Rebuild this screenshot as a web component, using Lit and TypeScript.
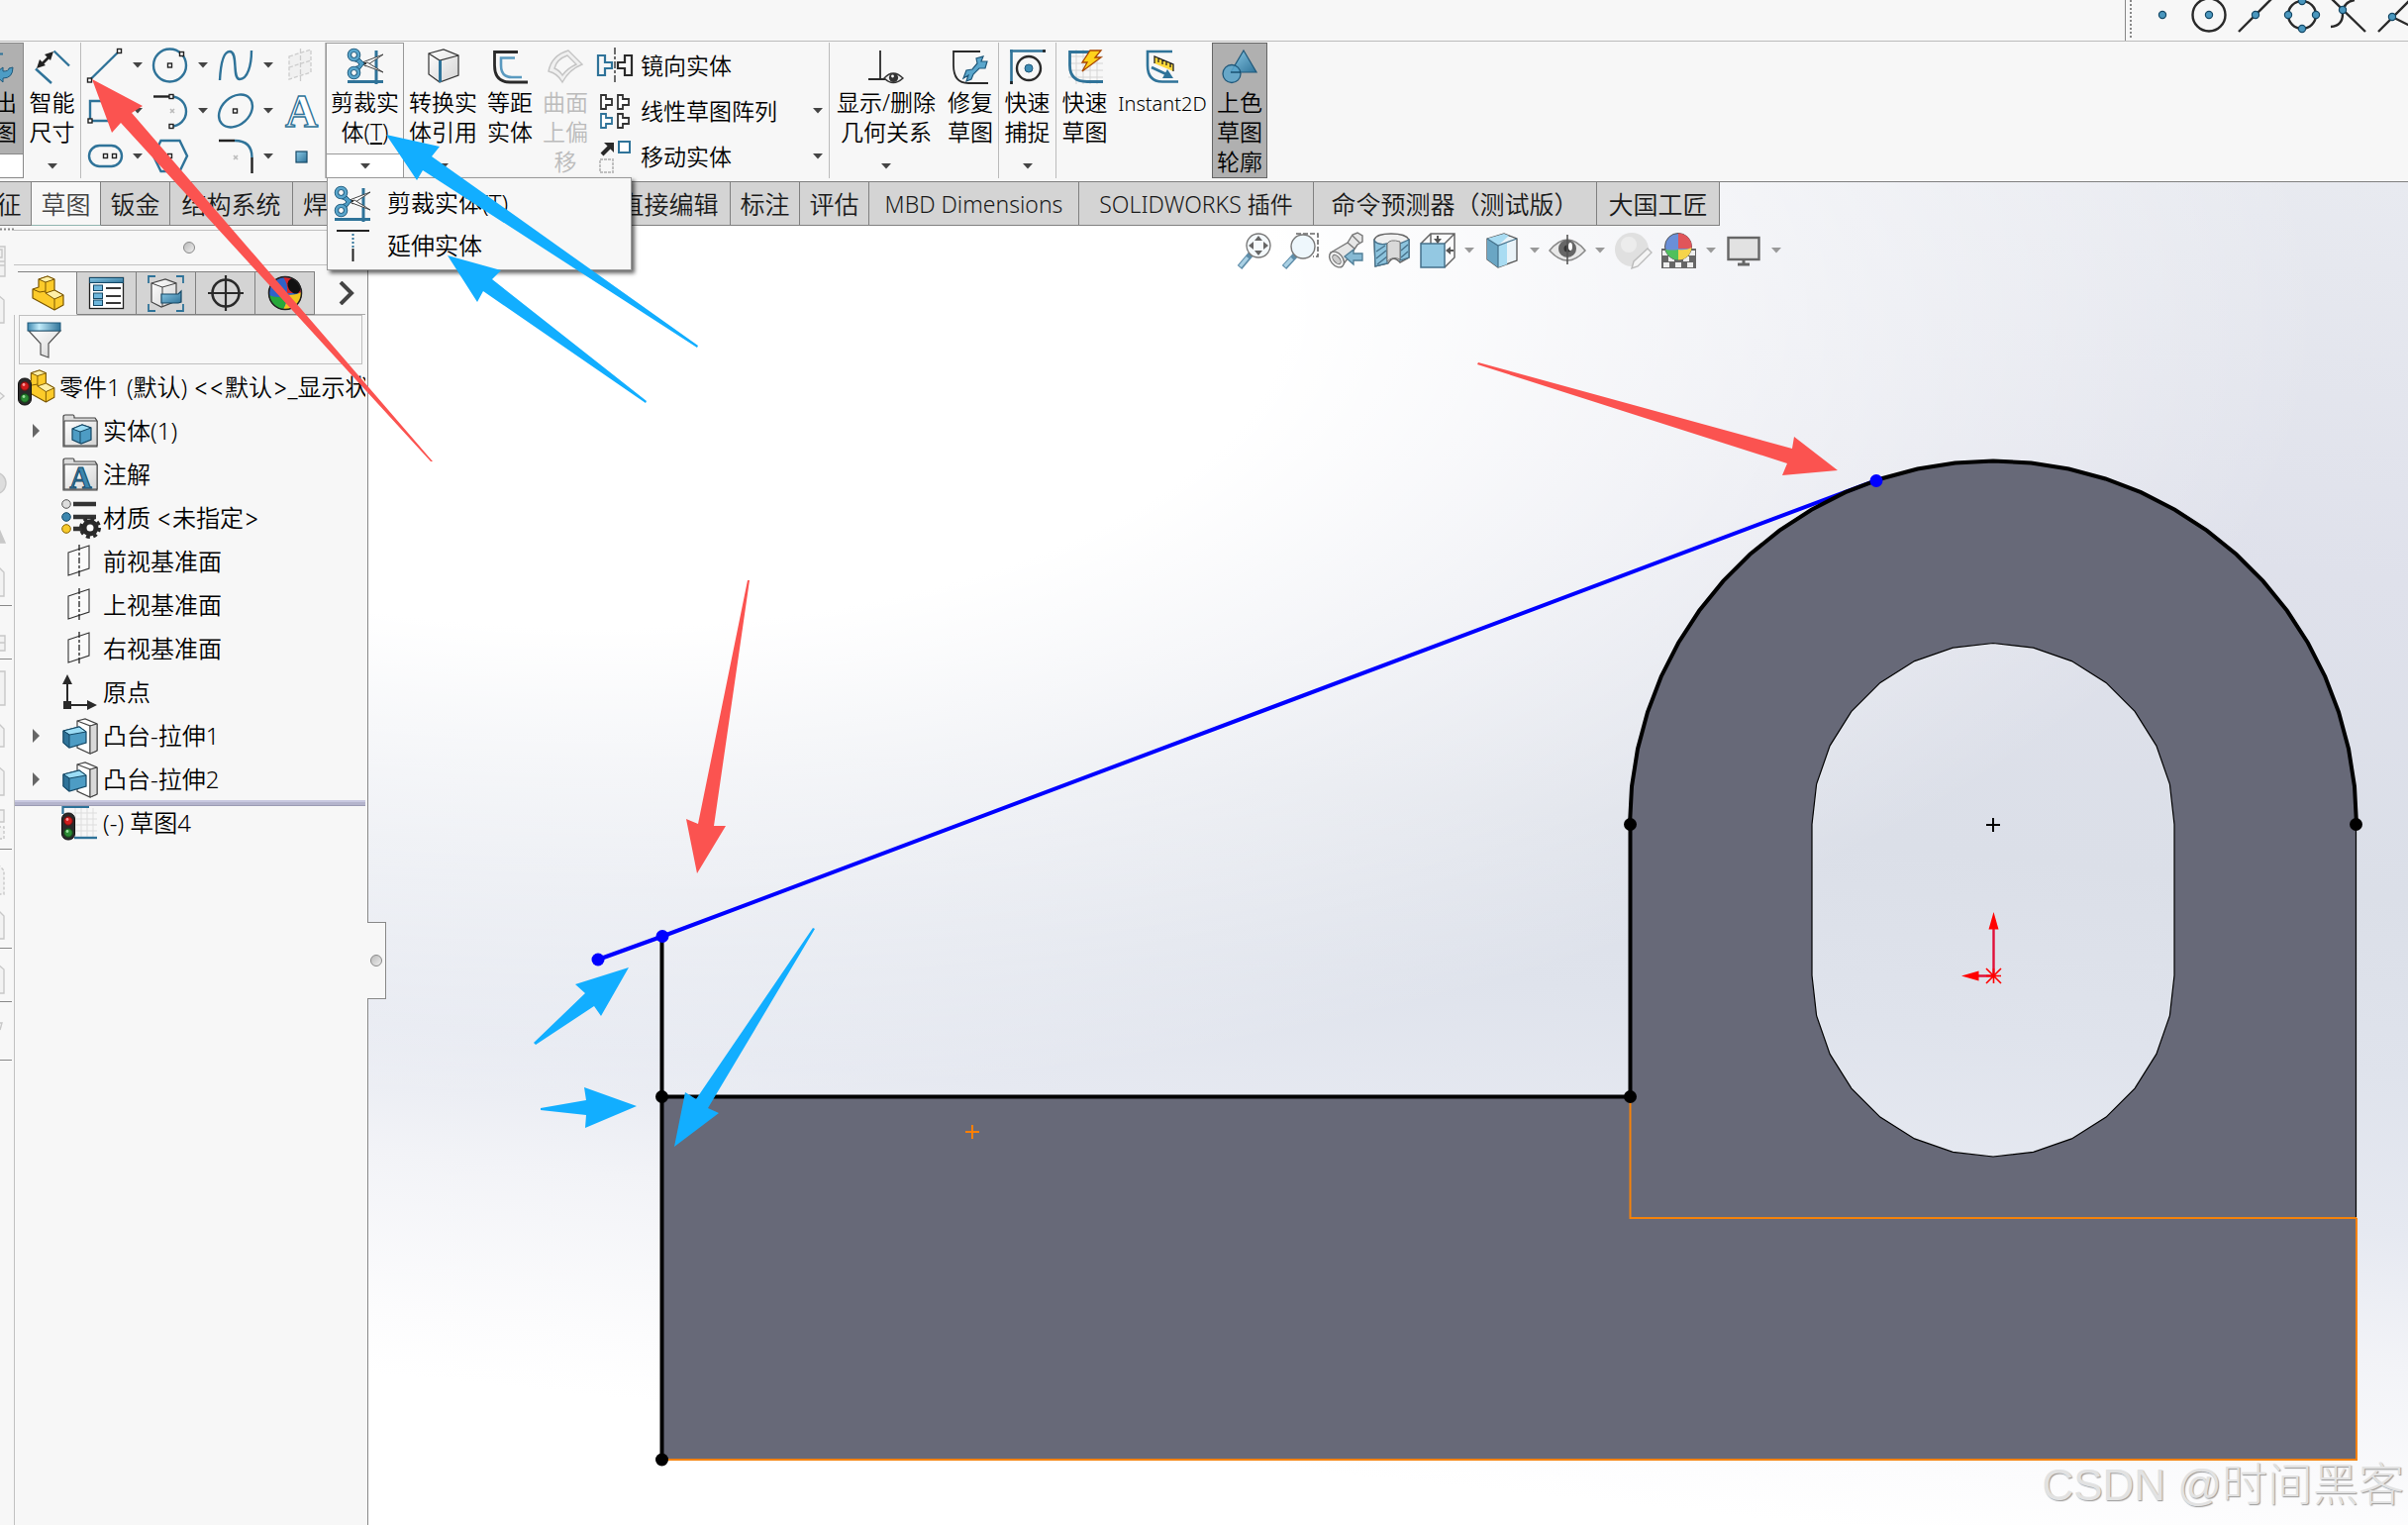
import { LitElement, html, svg, css, nothing } from "lit";
import type { SVGTemplateResult } from "lit";
import { customElement, state } from "lit/decorators.js";
import { classMap } from "lit/directives/class-map.js";
import { styleMap } from "lit/directives/style-map.js";

const BLUE = "#2f7399";
const INK = "#333";

const grip = (x: number, y: number) =>
  svg`<rect x=${x - 2} y=${y - 2} width="4" height="4" fill="#fff" stroke="#222" stroke-width="1.4"/>`;
const cross = (x: number, y: number) =>
  svg`<path d="M${x - 2} ${y - 2}l4 4m0 -4l-4 4" stroke="#bbb" stroke-width="1.6"/>`;

const partBody = svg`
  <path d="M3 14L9 12V4L18 1L25 4V15L34 20V30L25 35L3 23Z" fill="#fccb2a" stroke="#7a5600" stroke-width="1.2" stroke-linejoin="round"/>
  <path d="M9 4L18 1L25 4L16 7Z" fill="#fff0a8" stroke="#7a5600" stroke-width="1"/>
  <path d="M25 15L34 20L25 24L16 18Z" fill="#fff0a8" stroke="#7a5600" stroke-width="1"/>
  <path d="M16 7V18M3 14L10 17L16 16M25 24V35" fill="none" stroke="#7a5600" stroke-width="1"/>`;

const trafficLight = (x: number, y: number) => svg`
  <rect x=${x} y=${y} width="13" height="27" rx="6" fill="#2a2a2a" stroke="#111"/>
  <circle cx=${x + 6.5} cy=${y + 8} r="4.2" fill="#d01c1c" stroke="#701010"/>
  <circle cx=${x + 6.5} cy=${y + 20} r="4.2" fill="#2c8a34" stroke="#124d18"/>
  <circle cx=${x + 5.5} cy=${y + 6.5} r="1.4" fill="#ff9a9a"/>
  <circle cx=${x + 5.5} cy=${y + 18.5} r="1.4" fill="#9ee0a0"/>`;

const folder = svg`
  <path d="M2 34V4Q2 2 4 2H12Q13 2 13 4V5H34L36 8V34Z" fill="#dcdcdc" stroke="#444" stroke-width="1.2"/>
  <path d="M3 8H36V33H3Z" fill="url(#sheen)" stroke="#444" stroke-width="1"/>`;

const scissors = svg`
  <path d="M29 3V37M0 34.5H36" stroke=${BLUE} stroke-width="3"/>
  <path d="M15 15L36 7L18 19Z" fill="#fff" stroke="#444" stroke-width="1"/>
  <path d="M15 17L36 25L20 15Z" fill="#fff" stroke="#444" stroke-width="1"/>
  <path d="M10 9L17 16L10 25L6 20Q11 19 12 17Q10 14 5 13Z" fill="#4d9cc4" stroke="#1f587a" stroke-width="1"/>
  <circle cx="6.5" cy="7.5" r="4.6" fill="#f7f7f7" stroke="#1f587a" stroke-width="4.4"/>
  <circle cx="6.5" cy="7.5" r="4.6" fill="none" stroke="#5aa6cc" stroke-width="2.6"/>
  <circle cx="6.5" cy="25.5" r="4.6" fill="#f7f7f7" stroke="#1f587a" stroke-width="4.4"/>
  <circle cx="6.5" cy="25.5" r="4.6" fill="none" stroke="#5aa6cc" stroke-width="2.6"/>
  <circle cx="18" cy="16" r="1" fill="#111"/>`;

const planeIcon = svg`
  <path d="M7 9L28 2V25L7 32Z" fill="#fafafa" stroke="#333" stroke-width="1.1"/>
  <path d="M18 1V35" stroke="#222" stroke-width="1.3" stroke-dasharray="6 2 3 2"/>`;

const extrude = svg`
  <path d="M16 3L24 1L36 6V33L29 36L16 30Z" fill="#fff" stroke="#444" stroke-width="1.2"/>
  <path d="M16 3L29 8V36M29 8L36 6" fill="none" stroke="#444" stroke-width="1.1"/>
  <path d="M29 8L36 6V33L29 36Z" fill="#d9d9d9" stroke="#444" stroke-width="1"/>
  <path d="M2 13L18 9L25 14V25L8 30L2 25Z" fill="#4d9cc4" stroke="#144866" stroke-width="1.2"/>
  <path d="M2 13L18 9L25 14L8 17Z" fill="#9bdcf5" stroke="#144866" stroke-width="1"/>
  <path d="M2 13L8 17V30L2 25Z" fill="#2f7399" stroke="#144866" stroke-width="1"/>`;

const teeShape = (x: number, y: number, c: string) =>
  svg`<path d="M${x} ${y}h5v4h6v6h-6v4h-5z" fill="#fff" stroke=${c} stroke-width="1.8"/>`;

const ICONS: Record<string, SVGTemplateResult> = {
  exit: svg`<path d="M8 6.5H27" stroke=${BLUE} stroke-width="2"/>
    <path d="M37 20Q37 31 27 31V35L18 27L27 20V24Q33 24 33 21Z" fill="#4d9cc4" stroke="#1f587a"/>`,
  dim: svg`<path d="M19.5 3.5L35 18.5M1 21.5L17 36" stroke=${BLUE} stroke-width="2.4"/>
    <path d="M7 17L16 8" stroke="#222" stroke-width="2.6"/><path d="M2 21L5 12L11 18ZM19 4L10 7L16 13Z" fill="#222"/>`,
  line: svg`<path d="M2.5 33L32.5 3.5" stroke=${BLUE} stroke-width="2.4"/>${grip(2.5, 33)}${grip(32.5, 3.5)}`,
  circle: svg`<circle cx="17.5" cy="18" r="16.5" fill="none" stroke=${BLUE} stroke-width="2.4"/>${grip(17.5, 18)}${grip(29.5, 6.5)}`,
  spline: svg`<path d="M2 33C3 14 6 4 12 4C21 4 14 32 22 32C30 32 34 18 34 3" fill="none" stroke=${BLUE} stroke-width="2.4"/>`,
  plane3: svg`<path d="M6 9L28 2V25L6 32ZM6 20L28 13" fill="#f0f0f0" stroke="#ccc" stroke-width="1.3" stroke-dasharray="4 2"/><path d="M17.500 1V36" stroke="#ccc" stroke-width="1.300" stroke-dasharray="5 2"/>`,
  rect: svg`<path d="M3 8H33V28H3Z" fill="none" stroke=${BLUE} stroke-width="2.4"/>${grip(3, 28)}${grip(33, 8)}`,
  arc: svg`<path d="M1 3.500H18" stroke="#222" stroke-width="2.4"/><path d="M19 3.500A15 15 0 0 1 19 33.500" fill="none" stroke=${BLUE} stroke-width="2.4"/>${cross(20, 18)}${grip(19, 3.5)}${grip(19, 33.5)}`,
  ellipse: svg`<ellipse cx="18" cy="18" rx="19" ry="14" transform="rotate(-42 18 18)" fill="none" stroke=${BLUE} stroke-width="2.4"/>${grip(17.5, 18)}`,
  text: svg`<text x="18.500" y="34" text-anchor="middle" font-family="Liberation Serif, serif" font-size="46" font-weight="bold" fill="#fff" stroke=${BLUE} stroke-width="1.4">A</text>`,
  slot: svg`<rect x="2" y="7" width="33" height="21" rx="10.500" fill="none" stroke=${BLUE} stroke-width="2.4"/>${grip(18.5, 17.5)}${grip(27.5, 17.5)}`,
  polygon: svg`<path d="M8.500 2H27.500L35 17.500L27.500 33H8.500L1 17.500Z" fill="none" stroke=${BLUE} stroke-width="2.4"/>${grip(17.5, 17.5)}`,
  fillet: svg`<path d="M1 2H17M34.500 19V35" stroke="#222" stroke-width="2.4"/><path d="M17 2Q34.500 2 34.500 19" fill="none" stroke=${BLUE} stroke-width="2.4"/>${cross(18, 19)}`,
  point: svg`<rect x="13" y="13" width="11" height="11" fill="url(#steel)" stroke="#144866" stroke-width="1.2"/>`,
  trim: scissors,
  extend: svg`<path d="M2 3H35" stroke="#222" stroke-width="2"/><path d="M18.500 6V20" stroke=${BLUE} stroke-width="2" stroke-dasharray="2 2"/><path d="M18.500 21V34" stroke="#222" stroke-width="2"/>`,
  convert: svg`<path d="M3 6L18 2L33 8V28L14 35L3 27Z" fill="url(#sheen)" stroke="#333" stroke-width="1.2"/><path d="M3 6L14 13L33 8" fill="none" stroke="#333" stroke-width="1.2"/><path d="M14.500 13V35" stroke=${BLUE} stroke-width="3"/>`,
  offset: svg`<path d="M26 4.500H2.500V18Q2.500 35 18 35H36" fill="none" stroke="#2a2a2a" stroke-width="2.8"/><path d="M23 10.500H9V18Q9 30 20 30H30" fill="none" stroke="#5a9ac0" stroke-width="2.6"/>`,
  surface: svg`<path d="M21 3L35 17Q22 22 15 35Q10 26 1 24Q4 8 21 3Z" fill="#f0f0f0" stroke="#c4c4c4" stroke-width="1.4"/><path d="M20 8L29 17Q20 21 15 28Q12 23 7 21Q9 12 20 8Z" fill="#f7f7f7" stroke="#c4c4c4" stroke-width="1.4"/>`,
  mirror: svg`<path d="M2 8h7v7h7v6h-7v7h-7z" fill="none" stroke=${BLUE} stroke-width="2.2"/><path d="M36 8h-7v7h-7v6h7v7h7z" fill="none" stroke="#2a2a2a" stroke-width="2.2"/><path d="M19 0V37" stroke="#222" stroke-width="1.3" stroke-dasharray="7 2 3 2"/>`,
  pattern: svg`${teeShape(5, 2, INK)}${teeShape(22, 2, INK)}${teeShape(5, 21, BLUE)}${teeShape(22, 21, INK)}`,
  move: svg`<path d="M6 16L14 8" stroke="#2a2a2a" stroke-width="4"/><path d="M18 4V14L8 4Z" fill="#2a2a2a"/><rect x="23" y="3" width="11" height="11" fill="#fff" stroke=${BLUE} stroke-width="2"/><rect x="4" y="21" width="13" height="13" fill="none" stroke="#c0c0c0" stroke-width="2" stroke-dasharray="3 1"/>`,
  relations: svg`<path d="M12 3V32M0 32H18" stroke="#2a2a2a" stroke-width="1.8"/><path d="M16 31Q25 21 35 31Q25 40 16 31Z" fill="#eee" stroke="#333" stroke-width="1.4"/><circle cx="25.500" cy="30.500" r="4.600" fill="#333"/><circle cx="24.500" cy="29" r="1.400" fill="#fff"/>`,
  repair: svg`<path d="M28 4H1V18Q1 36 16 36H36" fill="none" stroke="#2a2a2a" stroke-width="1.8"/><path d="M11 31L14 23L20 22L25 16L24 11L31 9L29 14L35 14L33 21L27 21L21 27L19 32L14 34L16 28Z" fill="#5aa6cc" stroke="#1f587a" stroke-width="1.200"/>`,
  snap: svg`<path d="M0 3.500H36M1.500 2V37" stroke=${BLUE} stroke-width="2.6"/><path d="M33 3.500H36M1.500 34V37" stroke="#222" stroke-width="2.600"/><circle cx="19" cy="21" r="12" fill="none" stroke="#2a2a2a" stroke-width="2.400"/><circle cx="19" cy="21" r="4" fill="#3f8db5" stroke="#1f587a"/>`,
  rapid: svg`<path d="M9 2V37M16 2V37M23 2V37M30 2V37M1 9H36M1 16H36M1 23H36M1 30H36" stroke="#d5d5d5"/><path d="M22 4.500H2.500V18Q2.500 34.500 20 34.500H36" fill="none" stroke=${BLUE} stroke-width="2.8"/><path d="M23 3H34L28 10H34L15 24L20 15H15Z" fill="#ffd21c" stroke="#a84600" stroke-width="1.300"/>`,
  instant: svg`<path d="M28 4H3V18Q3 34.500 18 34.500H34" fill="none" stroke=${BLUE} stroke-width="2.600"/><path d="M10 9L29 17V24L10 16Z" fill="#ffd83a"/><path d="M10 16V9L29 17V24M14 11V15M18 12.500V17M22 14V18M26 16V20" fill="none" stroke="#222" stroke-width="1.300"/><path d="M7 20L22 27" stroke=${BLUE} stroke-width="2.800"/><path d="M29 31L18 31L23 22Z" fill=${BLUE}/>`,
  shaded: svg`<path d="M22 3L35 25H9Z" fill="url(#steel)" stroke="#1f587a" stroke-width="1.2"/><circle cx="10" cy="26.500" r="9" fill="#5aa6cc" fill-opacity=".85" stroke="#1f587a" stroke-width="1.300"/><path d="M9 25H19" stroke="#144866" stroke-width="1.300"/>`,

  part: partBody,
  props: svg`<rect x="1.500" y="2.500" width="34" height="31" fill="#fff" stroke="#222" stroke-width="1.300"/><rect x="1.500" y="2.500" width="34" height="5" fill="url(#steel)" stroke="#144866"/>
    ${[10, 18, 25].map((y) => svg`<rect x="5.500" y=${y} width="9" height="5.500" fill="#6db6dc" stroke="#144866"/><path d="M18 ${y + 3}H33" stroke="#222" stroke-width="1.800"/>`)}`,
  config: svg`<path d="M1 8V1H8M29 1H36V8M36 29V36H29M8 36H1V29" fill="none" stroke=${BLUE} stroke-width="1.800"/><path d="M4 8L18 4L29 8V26L14 32L4 27Z" fill="url(#sheen)" stroke="#444" stroke-width="1.200"/><path d="M4 8L15 12L29 8M15 12V31" fill="none" stroke="#444"/><path d="M14 19H31L34 16V27L31 28H14Z" fill="url(#steel)" stroke="#144866" stroke-width="1.200"/>`,
  target: svg`<circle cx="19" cy="18" r="13.500" fill="none" stroke="#2a2a2a" stroke-width="2.600"/><path d="M19 0V36M1 18H37" stroke="#2a2a2a" stroke-width="2.200"/>`,
  ball: svg`<circle cx="19" cy="18" r="16.500" fill="#2f62c8" stroke="#222"/><path d="M17 2A16.500 16.500 0 0 1 35 18L21 18Q22 8 17 2Z" fill="#d8232a"/><path d="M2.500 20Q12 24 21 20Q20 29 17 34.500A16.500 16.500 0 0 1 2.500 20Z" fill="#27a83a"/><path d="M21 20Q30 20 35.500 17A16.500 16.500 0 0 1 17 34.500Q21 28 21 20Z" fill="#f2c51d"/><ellipse cx="28" cy="11" rx="6" ry="8" transform="rotate(-30 28 11)" fill="#111"/><circle cx="19" cy="18" r="16.500" fill="none" stroke="#222" stroke-width="1.500"/>`,
  funnel: svg`<path d="M3 9L15 22V33L23 36V22L35 9Z" fill="url(#sheen)" stroke="#555" stroke-width="1.200"/><rect x="2" y="1" width="33" height="8" fill="url(#glow)" stroke="#1f587a"/>`,

  root: svg`<g transform="translate(3 0) scale(.94)"><g transform="translate(2 0)">${partBody}</g></g>${trafficLight(0.5, 9)}`,
  bodies: svg`${folder}<path d="M11 16L21 12L30 15V27L20 31L11 27Z" fill="#4d9cc4" stroke="#144866" stroke-width="1.200"/><path d="M11 16L21 12L30 15L19 19Z" fill="#9bdcf5" stroke="#144866"/><path d="M19 19V31" stroke="#144866"/>`,
  notes: svg`${folder}<text x="19.500" y="32" text-anchor="middle" font-family="Liberation Serif, serif" font-size="31" font-weight="bold" fill="#3c86ae" stroke="#144866">A</text>`,
  material: svg`<path d="M12 4H35M12 17H35M12 29H22" stroke="#333" stroke-width="4.500"/><circle cx="5" cy="4" r="4.300" fill="#ddd" stroke="#555"/><circle cx="5" cy="17" r="4.300" fill="#3c86ae" stroke="#144866"/><circle cx="5" cy="29" r="4.300" fill="#f7ca2b" stroke="#8a6400"/><circle cx="29" cy="28" r="6" fill="#fff" stroke="#2a2a2a" stroke-width="5"/><circle cx="29" cy="28" r="9.500" fill="none" stroke="#2a2a2a" stroke-width="3" stroke-dasharray="4 3.500"/>`,
  plane: planeIcon,
  origin: svg`<path d="M6 29V8M6 31H28" stroke="#2a2a2a" stroke-width="2"/><path d="M6 0L11 10H1ZM36 31L26 36V26Z" fill="#2a2a2a"/><rect x="2" y="27" width="8" height="8" fill="#2a2a2a"/>`,
  extrude,
  sketch: svg`<path d="M14 3V32M20 3V32M26 3V32M32 3V32M8 8H36M8 14H36M8 20H36M8 26H36" stroke="#ddd"/><path d="M1.500 9V2H28" fill="none" stroke=${BLUE} stroke-width="2.200"/><path d="M13 33H36" stroke=${BLUE} stroke-width="2.400"/>${trafficLight(0.5, 8)}`,

  zoomFit: svg`<path d="M3 35L14 22" stroke="#5d8ca8" stroke-width="6"/><path d="M3.500 34L11 25" stroke="#a9d0e4" stroke-width="3.500"/><circle cx="22" cy="13" r="12" fill="#f4f9fc" stroke="#777" stroke-width="1.400"/><path d="M22 3L26 8H18ZM22 23L26 18H18ZM12 13L17 9V17ZM32 13L27 9V17Z" fill="#666"/>`,
  zoomArea: svg`<path d="M14 1H36V24H31" fill="none" stroke="#666" stroke-width="1.600" stroke-dasharray="5 2"/><path d="M2 35L13 23" stroke="#5d8ca8" stroke-width="6"/><path d="M2.500 34L10 26" stroke="#a9d0e4" stroke-width="3.500"/><circle cx="21" cy="14" r="12" fill="#eef7fc" stroke="#777" stroke-width="1.400"/>`,
  prevView: svg`<path d="M3 20L20 10L25 2L30 0L35 3L35 9L30 12L26 18L15 33Z" fill="#e6e6e6" stroke="#777" stroke-width="1.400"/><path d="M20 10L27 16M25 3L32 10" stroke="#777" stroke-width="1.300"/><ellipse cx="9" cy="27" rx="6" ry="9" transform="rotate(-40 9 27)" fill="#f2f2f2" stroke="#777" stroke-width="1.400"/><ellipse cx="9" cy="27" rx="3" ry="5.500" transform="rotate(-40 9 27)" fill="#ccc" stroke="#777"/><path d="M17 24L26 17V21H35V28H26V32Z" fill="#86b9d3" stroke="#4f7d96" stroke-width="1.300"/>`,
  section: svg`<path d="M1 7Q3 1 18 1Q33 1 36 7V25L27 30Q20 22 15 31L2 34Z" fill="#f0f0f0" stroke="#666" stroke-width="1.400"/><path d="M1 8Q5 13 14 11V31L2 34ZM36 7L27 11V28L36 25Z" fill="#8cc3dd" stroke="#44708a" stroke-width="1.300"/><path d="M3 19L12 13M3 26L13 18M4 32L14 24M28 18L35 12M28 25L35 19" stroke="#44708a" stroke-width="1.300"/><path d="M14 11Q17 6 27 9V27Q20 23 14 29Z" fill="#d9d9d9" stroke="#777"/>`,
  orient: svg`<path d="M2 11L12 1H36V25L26 35M12 1V11M36 1L26 11" fill="none" stroke="#666" stroke-width="1.500"/><path d="M2 11H26V35H2Z" fill="#93c8e2" stroke="#44708a" stroke-width="1.500"/><path d="M19 3V8M35 18H30" stroke="#555" stroke-width="2"/><path d="M19 11L15 6H23ZM27 18L32 14V22Z" fill="#555"/>`,
  display: svg`<path d="M3 6L20 1L33 6V28L14 35L3 27Z" fill="#eaf3f8" stroke="#555" stroke-width="1.300"/><path d="M3 6L14 13V35L3 27Z" fill="#6aa6c4"/><path d="M14 13L23 10V32L14 35ZM3 6L20 1L25 3L14 13Z" fill="#a9dcf2"/><path d="M3 6L14 13L33 6M14 13V35" fill="none" stroke="#44708a" stroke-width="1.200"/>`,
  eye: svg`<path d="M0 18Q18 -4 36 18Q18 38 0 18Z" fill="#e8e8e8" stroke="#888" stroke-width="1.500"/><circle cx="18" cy="16" r="9" fill="#666"/><circle cx="18" cy="16" r="3.500" fill="#333"/><ellipse cx="21" cy="14" rx="2" ry="4" fill="#fff"/><path d="M18 2V32" stroke="#555" stroke-width="1.600"/>`,
  appearance: svg`<circle cx="17" cy="17" r="17" fill="#e0e0e0"/><circle cx="14" cy="12" r="8" fill="#ececec"/><path d="M17 36L19 29L33 16L37 20L23 34Z" fill="#f5f5f5" stroke="#bbb" stroke-width="1.400"/>`,
  scene: svg`<path d="M1 16H36V36H1Z" fill="#666"/><path d="M2 18H8V23H2ZM29 18H35V23H29ZM8 24H14V29H8ZM23 24H29V29H23ZM3 30H9V35H3ZM15 30H21V35H15ZM27 30H33V35H27Z" fill="#eee"/><circle cx="18" cy="14" r="13.500" fill="#6a8fd8" stroke="#555"/><path d="M18 .500A13.500 13.500 0 0 1 31.500 16L18 16Z" fill="#e0555a"/><path d="M5 17Q12 18 18 17V27.500A13.500 13.500 0 0 1 5 17Z" fill="#4fc05c"/><path d="M18 17Q26 18 31.500 15A13.500 13.500 0 0 1 18 27.500Z" fill="#f5d44a"/>`,
  monitor: svg`<rect x="2.500" y="5" width="31" height="22" fill="#e2e2e2" stroke="#666" stroke-width="2.400"/><path d="M18 28V31M12 32H24" stroke="#666" stroke-width="3"/>`,
};

const icon = (name: string) =>
  html`<svg class="icon" viewBox="0 0 36 36" aria-hidden="true">${ICONS[name]}</svg>`;
const caret = html`<svg class="caret" viewBox="0 0 10 6" aria-hidden="true"><path d="M0 0H10L5 5.500Z" fill="currentColor"/></svg>`;

/* Angle brackets are set in a wider face than the rest of a tree label. */
const treeLabel = (label: string) =>
  html`<span>${label.split(/([<>]+)/).map((p) => (/^[<>]/.test(p) ? html`<span class="sign">${p}</span>` : p))}</span>`;

interface Command { icon: string; lines: unknown[]; size: string; drop?: boolean; look?: string; off?: boolean; }

const SKETCH_TOOLS: { icon: string; label: string; drop?: boolean }[] = [
  { icon: "line", label: "直线", drop: true }, { icon: "circle", label: "圆", drop: true },
  { icon: "spline", label: "样条曲线", drop: true }, { icon: "plane3", label: "基准面" },
  { icon: "rect", label: "矩形", drop: true }, { icon: "arc", label: "圆弧", drop: true },
  { icon: "ellipse", label: "椭圆", drop: true }, { icon: "text", label: "文字" },
  { icon: "slot", label: "槽口", drop: true }, { icon: "polygon", label: "多边形" },
  { icon: "fillet", label: "圆角", drop: true }, { icon: "point", label: "点" },
];

const TABS: { label: string; width: number; latin?: boolean }[] = [
  { label: "特征", width: 70 }, { label: "草图", width: 70 }, { label: "钣金", width: 70 },
  { label: "结构系统", width: 124 }, { label: "焊件", width: 318 }, { label: "直接编辑", width: 124 },
  { label: "标注", width: 70 }, { label: "评估", width: 70 },
  { label: "MBD Dimensions", width: 212, latin: true }, { label: "SOLIDWORKS 插件", width: 237, latin: true },
  { label: "命令预测器（测试版）", width: 286 }, { label: "大国工匠", width: 124 },
];

const TREE: { icon: string; label: string; open?: boolean }[] = [
  { icon: "bodies", label: "实体(1)", open: true }, { icon: "notes", label: "注解" },
  { icon: "material", label: "材质 <未指定>" }, { icon: "plane", label: "前视基准面" },
  { icon: "plane", label: "上视基准面" }, { icon: "plane", label: "右视基准面" },
  { icon: "origin", label: "原点" }, { icon: "extrude", label: "凸台-拉伸1", open: true },
  { icon: "extrude", label: "凸台-拉伸2", open: true },
];

const VIEW_TOOLS: [string, string, boolean][] = [
  ["zoomFit", "整屏显示全图", false], ["zoomArea", "局部放大", false], ["prevView", "上一视图", false],
  ["section", "剖面视图", false], ["orient", "视图定向", true], ["display", "显示样式", true],
  ["eye", "隐藏/显示项目", true], ["appearance", "编辑外观", false], ["scene", "应用布景", true],
  ["monitor", "视图设定", true],
];

/* Facetted arc, the way the viewport tessellates round edges. */
const facets = (cx: number, cy: number, r: number, from: number, to: number, n: number) =>
  Array.from({ length: n + 1 }, (_, i) => {
    const a = ((from + ((to - from) * i) / n) * Math.PI) / 180;
    return `${(cx + r * Math.cos(a)).toFixed(1)} ${(cy + r * Math.sin(a)).toFixed(1)}`;
  }).join("L");

const OUTER = facets(2013, 832.5, 367, 180, 360, 30);
const HOLE = `M${facets(2013, 832.5, 183, 180, 360, 14)}L${facets(2013, 985, 183, 0, 180, 14)}Z`;

const RED_ARROWS = [
  "93,80 144,107 133,114 437,466 435,466 122,124 113,134",
  "1856,475 1812,441 1810,453 1493,366 1492,368 1805,468 1800,480",
  "704,882 733,834 721,834 757,586 755,586 705,832 693,827",
];
const BLUE_ARROWS = [
  "390,136 444,148 436,158 705,349 704,351 427,172 421,182",
  "452,258 506,273 497,282 653,405 652,407 488,294 482,305",
  "635,977 581,994 591,1003 539,1053 541,1055 600,1016 607,1026",
  "643,1117 590,1098 592,1111 546,1119 546,1121 592,1126 591,1139",
  "681,1158 692,1103 703,1110 821,937 823,938 715,1119 726,1124",
];

@customElement("app-root")
export class AppRoot extends LitElement {
  @state() private activeTab = "草图";

  static styles = css`
    :host {
      display: block;
      font-family: "Noto Sans", "Noto Sans CJK SC", sans-serif;
      font-size: 23px;
      font-weight: 350;
      line-height: 30px;
      color: #000;
    }
    * { box-sizing: border-box; }
    button {
      font: inherit; color: inherit; background: none; border: 0; padding: 0; margin: 0;
      border-radius: 0; cursor: pointer;
    }
    .app { position: relative; min-height: 100vh; display: flex; flex-direction: column; background: #f7f7f7; overflow: hidden; }
    .defs { position: absolute; width: 0; height: 0; }
    .icon { width: 36px; height: 36px; display: block; flex: none; overflow: visible; }
    .caret { width: 10px; height: 6px; display: block; flex: none; color: #444; }

    .topbar { height: 42px; flex: none; border-bottom: 1px solid #bbb; display: flex; justify-content: flex-end; }
    .snaps { width: 286px; border-left: 1px solid #888; display: flex; }
    .snaps svg { display: block; width: 100%; height: 41px; }

    .ribbon { height: 141px; flex: none; display: flex; padding: 1px 0 3px; white-space: nowrap; }
    .sep { width: 1px; flex: none; background: #bbb; }
    .cmd { display: flex; flex-direction: column; flex: none; width: 56px; border: 1px solid transparent; }
    .cmd.edge { margin-left: -36px; width: 60px; }
    .cmd.slim { width: 57px; }
    .cmd.mid { width: 79px; }
    .cmd.wide { width: 114px; }
    .cmd.word { width: 100px; }
    .main { flex: 1; display: flex; flex-direction: column; align-items: center; gap: 4px; padding-top: 4px; text-align: center; min-width: 0; }
    .label { display: block; height: 60px; }
    .drop { height: 23px; display: flex; align-items: center; justify-content: center; }
    .cmd.pressed { border-color: #888; }
    .cmd.pressed .main { background: #b0b0b0; border-bottom: 1px solid #888; }
    .cmd.pressed .drop { background: #fff; }
    .cmd.hover { border-color: #999; }
    .cmd.hover .main { border-bottom: 1px solid #999; }
    .cmd.hover .drop { background: #fff; }
    .cmd.on { border-color: #666; background: #b0b0b0; }
    .off { color: #bbb; }
    .latin { font-size: 20px; }

    .tools { display: grid; grid-template-columns: repeat(3, 66px) 36px; grid-template-rows: repeat(3, 46px); padding: 0 6px; flex: none; }
    .tool { display: flex; align-items: center; gap: 10px; }
    .list { display: grid; grid-template-rows: repeat(3, 46px); width: 238px; padding: 0 6px 0 3px; flex: none; }
    .row { display: flex; align-items: center; gap: 9px; }
    .row .caret { margin-left: auto; }

    .work {
      flex: 1; display: flex; flex-direction: column; border-top: 1px solid #808080;
      background:
        radial-gradient(ellipse 1750px 800px at 600px 130px, #fff 0, #fff 40%, rgba(255, 255, 255, 0) 100%),
        linear-gradient(186deg, #e8eaf0 0, #dfe1eb 25%, #dbdfe8 45%, #dfe3ec 56%, #e6e9f1 66%, #f2f3f7 74%, #fcfcfd 84%, #fff 88%);
    }
    .tabs { height: 44px; display: flex; margin-left: -38px; flex: none; }
    .tab {
      flex: none; background: #d4d4d4; border-right: 1px solid #808080; border-bottom: 1px solid #808080;
      font-size: 25px; color: #1a1a1a; white-space: nowrap; overflow: hidden;
    }
    .tab.active { background: #f7f7f7; border-bottom-color: #8fb5b0; color: #444; }
    .tab.latin { font-size: 23px; }
    .tab.left { text-align: left; padding-left: 10px; }

    .body { flex: 1; display: flex; min-height: 0; }
    .strip { width: 14px; flex: none; background: #f7f7f7; }
    .strip svg { display: block; }
    .panel { width: 358px; flex: none; background: #f7f7f7; border-right: 1px solid #888; display: flex; flex-direction: column; }
    .handle { height: 40px; border-bottom: 1px solid #c0c0c0; padding-top: 4px; flex: none; display: flex; }
    .handle span { flex: 1; border-top: 1px solid #c0c0c0; display: flex; align-items: center; justify-content: center; padding-right: 4px; }
    .knob { width: 12px; height: 12px; border-radius: 50%; border: 1px solid #888; background: linear-gradient(135deg, #bbb, #eee); }
    .ptabs { height: 44px; margin: 6px 2px 0 4px; display: flex; flex: none; }
    .ptab { width: 60px; background: #d4d4d4; border: 1px solid #808080; border-left: 0; display: flex; align-items: center; justify-content: center; padding-right: 2px; }
    .ptab.first { background: #f7f7f7; border-bottom-color: transparent; padding-right: 0; }
    .more { flex: 1; border-bottom: 1px solid #aaa; display: flex; align-items: center; justify-content: center; padding-left: 12px; }
    .below { flex: 1; border-left: 1px solid #c0c0c0; }
    .filter { margin: 0 5px 0 4px; height: 50px; border: 1px solid #c0c0c0; display: flex; align-items: center; gap: 8px; padding-left: 6px; }
    .filter input { flex: 1; min-width: 0; height: 40px; border: 0; background: none; outline: 0; font: inherit; }
    .tree { list-style: none; margin: 1px 2px 0 0; padding: 0; font-size: 24px; overflow: hidden; }
    .node { height: 44px; display: flex; align-items: center; gap: 6px; padding-left: 18px; white-space: nowrap; }
    .node.root { padding-left: 3px; }
    .sign { font-family: Inter, "Noto Sans", sans-serif; }
    .twist { width: 7px; height: 14px; margin-right: 16px; flex: none; display: block; }
    .rollback { height: 6px; margin: -1px 0 -5px; background: linear-gradient(#c8c8e0 0 33%, #b4b4cc 33% 80%, #9c9cb4 80%); position: relative; }

    .view { flex: 1; position: relative; min-width: 0; }
    .scene { position: absolute; inset: 0; width: 100%; height: 100%; }
    .viewbar { position: relative; display: flex; padding-top: 7px; }
    .viewbar::before { content: ""; flex: 877; }
    .viewbar::after { content: ""; flex: 633; }
    .vtools { display: flex; gap: 10px; flex: none; }
    .vtool { display: flex; align-items: center; gap: 10px; flex: none; }
    .vtool .caret { color: #999; }
    .fold { position: absolute; left: -1px; top: 703px; width: 19px; height: 78px; background: #f7f7f7; border: 1px solid #888; border-left: 0; display: flex; align-items: center; justify-content: center; }
    .mark { position: absolute; right: 4px; bottom: 10px; font-size: 46px; line-height: 60px; font-weight: 300; color: #e2e2e2; text-shadow: 1px 1px 1px #999; font-family: "Noto Sans CJK SC", sans-serif; white-space: nowrap; }
    .cs { font-family: "Liberation Sans", sans-serif; font-size: 44px; }

    .menu { position: absolute; left: 330px; top: 179px; width: 308px; margin: 0; padding: 3px 0; list-style: none; background: #f7f7f7; border: 1px solid #999; box-shadow: 3px 3px 4px rgba(0, 0, 0, 0.6); font-size: 24px; }
    .item { width: 100%; height: 43px; display: flex; align-items: center; gap: 17px; padding-left: 7px; }
    .notes { position: absolute; left: 0; top: 0; width: 100%; height: 100%; pointer-events: none; }
  `;

  private command(c: Command) {
    return html`
      <div class="cmd ${c.size} ${c.look ?? ""} ${c.off ? "off" : ""}">
        <button class="main" ?disabled=${c.off ?? false}>
          ${icon(c.icon)}
          <span class="label">${c.lines.map((l, i) => (i ? html`<br />${l}` : l))}</span>
        </button>
        ${c.drop ? html`<button class="drop" aria-label="展开">${caret}</button>` : nothing}
      </div>`;
  }

  private listRow(name: string, label: string, drop: boolean) {
    return html`<button class="row">${icon(name)}<span>${label}</span>${drop ? caret : nothing}</button>`;
  }

  private renderSnaps() {
    const dot = (x: number, y: number) =>
      svg`<circle cx=${x} cy=${y} r="3.600" fill="#4a97be" stroke="#144866" stroke-width="1.200"/>`;
    return html`<div class="snaps">
      <svg viewBox="2147 0 285 41" preserveAspectRatio="xMaxYMin slice" aria-hidden="true">
        <path d="M2152 0V40" stroke="#888" stroke-width="2" stroke-dasharray="2 2"/>
        <g fill="none" stroke="#2a2a2a" stroke-width="2.400">
          <circle cx="2231" cy="15" r="16.500"/>
          <path d="M2261 32L2294 -1"/><circle cx="2325" cy="15" r="14"/>
          <path d="M2354 -2L2389 32M2354 27Q2366 26 2366 14Q2366 2 2378 0"/>
          <path d="M2402 32L2436 -2M2416 17L2436 27"/>
        </g>
        ${dot(2184, 15)}${dot(2231, 15)}${dot(2278, 15)}${dot(2325, 1)}${dot(2311, 15)}${dot(2339, 15)}${dot(2325, 29)}${dot(2366, 10)}${dot(2416, 17)}
      </svg>
    </div>`;
  }

  private renderRibbon() {
    return html`<div class="ribbon">
      ${this.command({ icon: "exit", lines: ["退出", "草图"], size: "edge", look: "pressed", drop: true })}
      ${this.command({ icon: "dim", lines: ["智能", "尺寸"], size: "slim", drop: true })}
      <div class="sep"></div>
      <div class="tools">
        ${SKETCH_TOOLS.map((t) => html`<button class="tool" aria-label=${t.label}>${icon(t.icon)}${t.drop ? caret : nothing}</button>`)}
      </div>
      <div class="sep"></div>
      ${this.command({ icon: "trim", lines: ["剪裁实", html`体(<u>T</u>)`], size: "mid", look: "hover", drop: true })}
      ${this.command({ icon: "convert", lines: ["转换实", "体引用"], size: "mid", drop: true })}
      ${this.command({ icon: "offset", lines: ["等距", "实体"], size: "" })}
      ${this.command({ icon: "surface", lines: ["曲面", "上偏", "移"], size: "", off: true })}
      <div class="list">
        ${this.listRow("mirror", "镜向实体", false)}
        ${this.listRow("pattern", "线性草图阵列", true)}
        ${this.listRow("move", "移动实体", true)}
      </div>
      <div class="sep"></div>
      ${this.command({ icon: "relations", lines: ["显示/删除", "几何关系"], size: "wide", drop: true })}
      ${this.command({ icon: "repair", lines: ["修复", "草图"], size: "" })}
      <div class="sep"></div>
      ${this.command({ icon: "snap", lines: ["快速", "捕捉"], size: "slim", drop: true })}
      <div class="sep"></div>
      ${this.command({ icon: "rapid", lines: ["快速", "草图"], size: "slim" })}
      ${this.command({ icon: "instant", lines: [html`<span class="latin">Instant2D</span>`], size: "word" })}
      ${this.command({ icon: "shaded", lines: ["上色", "草图", "轮廓"], size: "", look: "on" })}
    </div>`;
  }

  private renderStrip() {
    return html`<div class="strip">
      <svg width="14" height="860" viewBox="0 228 14 860" aria-hidden="true">
        <path d="M0 231.500H14" stroke="#888" stroke-width="2" stroke-dasharray="2 2"/>
        <g fill="#f2f2f2" stroke="#c8c8c8" stroke-width="1.400">
          <path d="M-2 249H5V279H-2ZM-2 264H5M-2 268H5M-2 252H2V260H-2"/>
          <path d="M-2 298L4 303V326H-2M-2 395L4 400L-2 405"/>
          <circle cx="-5" cy="488" r="11" fill="#ddd"/>
          <path d="M-2 532L5 548H-2" fill="#c8c8c8"/>
          <path d="M-2 572L4 578V602H-2M-2 642H5V657H-2M-2 649H5M-2 678H5V712H-2M-2 730L4 736V754H-2M-2 774L4 779V803H-2M-2 818H4V830H-2"/>
          <path d="M-2 835H4V847H-2M-2 873L4 879V903H-2" stroke-dasharray="3 2"/>
          <path d="M-2 919L4 925V948H-2M-2 974L4 979V1003H-2M-2 1033H2L0 1040"/>
        </g>
        <path d="M0 611.500H12M0 665.500H12M0 857.500H12M0 957.500H12M0 1011.500H12M0 1070.500H12" stroke="#888"/>
      </svg>
    </div>`;
  }

  private renderPanel() {
    const twist = html`<svg class="twist" viewBox="0 0 7 14" aria-hidden="true"><path d="M0 0L7 7L0 14Z" fill="#666"/></svg>`;
    return html`<aside class="panel">
      <div class="handle"><span><i class="knob"></i></span></div>
      <div class="ptabs">
        ${[["part", "设计树"], ["props", "属性"], ["config", "配置"], ["target", "尺寸专家"], ["ball", "外观"]].map(
          ([n, label], i) => html`<button class=${classMap({ ptab: true, first: i === 0 })} aria-label=${label}>${icon(n)}</button>`)}
        <button class="more" aria-label="更多">
          <svg width="16" height="24" viewBox="0 0 16 24" aria-hidden="true"><path d="M2 1L13 12L2 23" fill="none" stroke="#444" stroke-width="4"/></svg>
        </button>
      </div>
      <div class="below">
        <label class="filter">${icon("funnel")}<input type="text" aria-label="过滤" /></label>
        <ul class="tree">
          <li class="node root">${icon("root")}${treeLabel("零件1 (默认) <<默认>_显示状")}</li>
          ${TREE.map((n) => html`<li class="node">${n.open ? twist : html`<span class="twist"></span>`}${icon(n.icon)}${treeLabel(n.label)}</li>`)}
          <li class="rollback"></li>
          <li class="node"><span class="twist"></span>${icon("sketch")}<span>(-) 草图4</span></li>
        </ul>
      </div>
    </aside>`;
  }

  private renderScene() {
    return html`<svg class="scene" viewBox="372 228 2060 1312" preserveAspectRatio="xMinYMin meet" role="img" aria-label="零件草图">
      <path d="M668.500 1107.500H1646.500V833L${OUTER}V1474H668.500Z${HOLE}" fill="#676978" fill-rule="evenodd"/>
      <path d=${HOLE} fill="none" stroke="#000" stroke-width="1.200"/>
      <path d="M2379.500 833V1230" stroke="#000" stroke-width="1.200"/>
      <path d="M1646.500 1107V1230H2380M668 1474H2380V1230" fill="none" stroke="#f5820a" stroke-width="2"/>
      <path d="M604 969L669 945.500L1895 485" fill="none" stroke="#00f" stroke-width="4"/>
      <path d="M668.500 946V1474M668 1107.500H1646.500V833L${OUTER}" fill="none" stroke="#000" stroke-width="4"/>
      <g fill="#000">
        <circle cx="668.500" cy="1107.500" r="6.500"/><circle cx="668.500" cy="1474" r="6.500"/>
        <circle cx="1646.500" cy="1107.500" r="6.500"/><circle cx="1646.500" cy="832.500" r="6.500"/><circle cx="2379.500" cy="832.500" r="6.500"/>
      </g>
      <g fill="#00f"><circle cx="604" cy="969" r="6.500"/><circle cx="669" cy="945.500" r="6.500"/><circle cx="1895" cy="485.500" r="6.500"/></g>
      <path d="M2006 833H2020M2013 826V840" stroke="#000" stroke-width="2"/>
      <path d="M975 1143H989M982 1136V1150" stroke="#ff7f00" stroke-width="2"/>
      <path d="M2013.500 985V936M2013 985.500H1998" stroke="#e0103a" stroke-width="2.400"/>
      <path d="M2013.500 921L2018.500 938.500H2008.500ZM1981 985.500L1998.500 980.500V990.500Z" fill="#f00"/>
      <path d="M2006 978L2021 993M2021 978L2006 993M2013.500 978V993M2006 985.500H2021" stroke="#f00" stroke-width="1.600"/>
    </svg>`;
  }

  render() {
    return html`<div class="app" lang="zh-CN">
      <svg class="defs" aria-hidden="true"><defs>
        <linearGradient id="steel" x1="0" y1="0" x2="1" y2="1"><stop offset="0" stop-color="#8ccbe8"/><stop offset="1" stop-color="#2f7399"/></linearGradient>
        <linearGradient id="sheen" x1="0" y1="0" x2="1" y2="1"><stop offset="0" stop-color="#fff"/><stop offset="1" stop-color="#d4d4d4"/></linearGradient>
        <linearGradient id="glow"><stop offset="0" stop-color="#3c86ae"/><stop offset=".35" stop-color="#c2ecfb"/><stop offset="1" stop-color="#2f7399"/></linearGradient>
      </defs></svg>
      <header class="topbar">${this.renderSnaps()}</header>
      ${this.renderRibbon()}
      <div class="work">
        <nav class="tabs">
          ${TABS.map((t) => html`<button
            class=${classMap({ tab: true, active: t.label === this.activeTab, latin: !!t.latin, left: t.width > 300 })}
            style=${styleMap({ width: `${t.width}px` })}
            @click=${() => (this.activeTab = t.label)}>${t.label}</button>`)}
        </nav>
        <div class="body">
          ${this.renderStrip()}
          ${this.renderPanel()}
          <main class="view">
            ${this.renderScene()}
            <div class="viewbar"><div class="vtools">
              ${VIEW_TOOLS.map(([n, label, drop]) => html`<button class="vtool" aria-label=${label}>${icon(n)}${drop ? caret : nothing}</button>`)}
            </div></div>
            <button class="fold" aria-label="折叠面板"><i class="knob"></i></button>
            <div class="mark"><span class="cs">CSDN @</span>时间黑客</div>
          </main>
        </div>
      </div>
      <ul class="menu">
        <li><button class="item">${icon("trim")}<span>剪裁实体(T)</span></button></li>
        <li><button class="item">${icon("extend")}<span>延伸实体</span></button></li>
      </ul>
      <svg class="notes" viewBox="0 0 2432 1540" preserveAspectRatio="xMinYMin meet" aria-hidden="true">
        <g fill="#fb5350">${RED_ARROWS.map((p) => svg`<polygon points=${p}/>`)}</g>
        <g fill="#12aeff">${BLUE_ARROWS.map((p) => svg`<polygon points=${p}/>`)}</g>
      </svg>
    </div>`;
  }
}
